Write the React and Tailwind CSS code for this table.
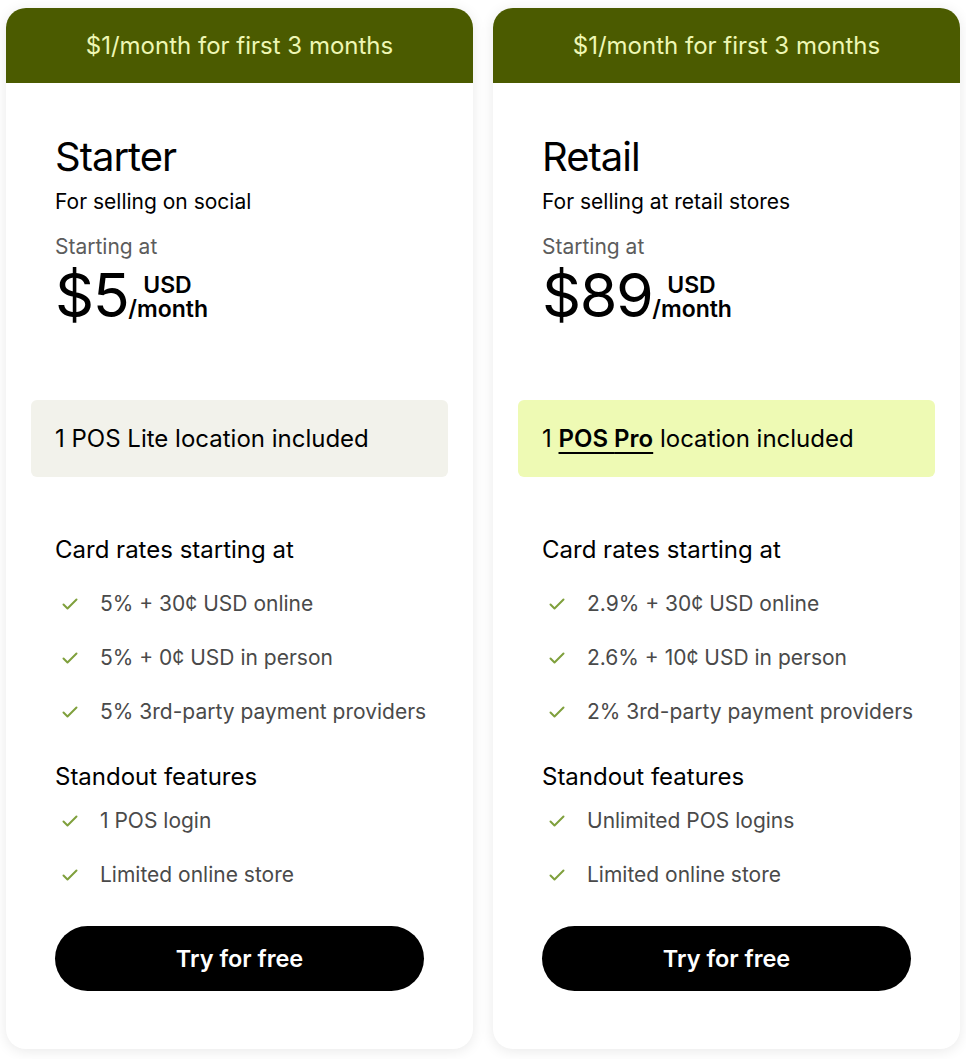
import React from "react";

const plans = [
  {
    name: "Starter",
    tagline: "For selling on social",
    price: "$5",
    pos: "Lite",
    highlight: false,
    rates: ["5% + 30¢ USD online", "5% + 0¢ USD in person", "5% 3rd-party payment providers"],
    features: ["1 POS login", "Limited online store"],
  },
  {
    name: "Retail",
    tagline: "For selling at retail stores",
    price: "$89",
    pos: "Pro",
    highlight: true,
    rates: ["2.9% + 30¢ USD online", "2.6% + 10¢ USD in person", "2% 3rd-party payment providers"],
    features: ["Unlimited POS logins", "Limited online store"],
  },
];

const Check = () => (
  <svg width="16" height="16" viewBox="0 0 16 16" fill="none" className="shrink-0">
    <path d="M1.5 8.5l4 4 9-9" stroke="#7fa03c" strokeWidth="2" strokeLinecap="round" strokeLinejoin="round" />
  </svg>
);

const Item = ({ children }) => (
  <li className="flex items-center h-[28px] pl-[7px] gap-[22px] text-[21px] text-[#4a4a4a] whitespace-nowrap">
    <Check />
    <span>{children}</span>
  </li>
);

const PlanCard = ({ plan }) => (
  <div className="w-[467px] rounded-[20px] overflow-hidden bg-white shadow-[0_2px_14px_rgba(0,0,0,0.09)]">
    {/* promo banner */}
    <div className="h-[75px] flex items-center justify-center bg-[#4b5b00] text-[24px] text-[#eef7b4]">
      $1/month for first 3 months
    </div>

    <div className="px-[49px] pt-[50px] pb-[58px] text-black">
      <h2 className="text-[40px] leading-[48px] tracking-[-1px]">{plan.name}</h2>
      <p className="mt-[7px] text-[21px] leading-[28px]">{plan.tagline}</p>
      <p className="mt-[17px] text-[21px] leading-[28px] text-[#5c5c5c]">Starting at</p>
      <div className="mt-[4px] flex items-end">
        <span className="text-[61px] leading-none tracking-[-1.5px]">{plan.price}</span>
        <div className="flex flex-col pb-[5px] text-[23px] leading-[24px] font-semibold">
          <span className="pl-[15px]">USD</span>
          <span>/month</span>
        </div>
      </div>

      <div
        className={
          "mt-[74px] -mx-[24px] h-[77px] px-[24px] flex items-center rounded-[6px] text-[24px] " +
          (plan.highlight ? "bg-[#eefab4]" : "bg-[#f2f2eb]")
        }
      >
        {plan.highlight ? (
          <span>
            1{" "}
            <span className="font-semibold underline decoration-2 underline-offset-[5px]">POS {plan.pos}</span>{" "}
            location included
          </span>
        ) : (
          <span>1 POS {plan.pos} location included</span>
        )}
      </div>

      <h3 className="mt-[57px] text-[24px] leading-[32px]">Card rates starting at</h3>
      <ul className="mt-[24px] flex flex-col gap-[26px]">
        {plan.rates.map((r) => (
          <Item key={r}>{r}</Item>
        ))}
      </ul>

      <h3 className="mt-[35px] text-[24px] leading-[32px]">Standout features</h3>
      <ul className="mt-[14px] flex flex-col gap-[26px]">
        {plan.features.map((f) => (
          <Item key={f}>{f}</Item>
        ))}
      </ul>

      <button className="mt-[37px] w-full h-[65px] rounded-full bg-black text-white text-[23.5px] font-semibold">
        Try for free
      </button>
    </div>
  </div>
);

export default function App() {
  return (
    <div className="min-h-screen bg-white pt-[8px] px-[6px] font-['Inter','Liberation_Sans',sans-serif]">
      <div className="flex gap-[20px]">
        {plans.map((p) => (
          <PlanCard key={p.name} plan={p} />
        ))}
      </div>
    </div>
  );
}
